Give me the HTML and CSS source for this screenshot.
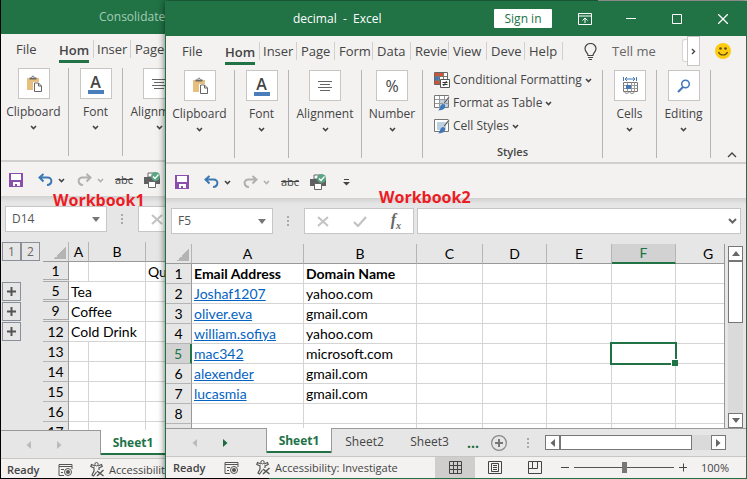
FILE: index.html
```html
<!DOCTYPE html>
<html lang="en">
<head>
<meta charset="utf-8">
<title>decimal - Excel</title>
<link rel="stylesheet" href="styles.css">
</head>
<body>
<svg class="defs" aria-hidden="true">
  <symbol id="chev" viewBox="0 0 7 5"><path d="M1 1l2.500 2.500L6 1" fill="none" stroke="currentColor" stroke-width="1.6"/></symbol>
  <symbol id="paste" viewBox="0 0 16 17">
    <path d="M1 3h12v4h-6v8H1z" fill="#e8c07d"/>
    <path d="M3.500 4.500V2.500h2C5.500 0 8.500 0 8.500 2.500h2v2z" fill="#6a6a6a"/><circle cx="7" cy="2.300" r=".8" fill="#fff"/>
    <path d="M8.500 8h4l3 3v5.500h-7z" fill="#fff" stroke="#666"/><path d="M12.500 8v3h3" fill="none" stroke="#666"/>
  </symbol>
  <symbol id="align" viewBox="0 0 16 12"><path d="M1 1.500h14M3 4.500h10M1 7.500h14M3 10.500h10" stroke="#666" fill="none"/></symbol>
  <symbol id="save" viewBox="0 0 14 14"><path d="M0 0h14v14H0z" fill="#8a4fae"/><path d="M2 1h10v6H2zM4 9h7v4H4z" fill="#fff"/><path d="M6 11h2v2H6z" fill="#8a4fae"/></symbol>
  <symbol id="undo" viewBox="0 0 15 14"><path d="M5.500 1L1.500 4.500l4 4M2 4.500h7.500c5.500 0 5 7-.5 7.500" fill="none" stroke="currentColor" stroke-width="2"/></symbol>
  <symbol id="print" viewBox="0 0 17 16">
    <path d="M4 1h6v4H4z" fill="#fff" stroke="#666"/><path d="M0 5h16v7H0z" fill="#606060"/><path d="M4.500 9.500h7v6h-7z" fill="#fff" stroke="#666"/>
    <circle cx="11.500" cy="4.500" r="4.500" fill="#5ba583"/><path d="M9 4.500l2 2 3.500-4" fill="none" stroke="#fff" stroke-width="1.200"/>
  </symbol>
  <symbol id="dots" viewBox="0 0 3 12"><path d="M0 1h2v2H0zM0 5h2v2H0zM0 9h2v2H0z" fill="#aaa"/></symbol>
  <symbol id="cross" viewBox="0 0 12 11"><path d="M1 1l10 9M11 1L1 10" stroke="#c3c3c3" stroke-width="2"/></symbol>
  <symbol id="tick" viewBox="0 0 14 11"><path d="M1 6l4 4 8-9" fill="none" stroke="#c3c3c3" stroke-width="2.200"/></symbol>
  <symbol id="record" viewBox="0 0 15 14">
    <path d="M14 6V1.500H1v11h5M1 3.500h13M3 6.500h3M3 9.500h2" fill="none" stroke="#555"/><circle cx="10" cy="9" r="3.500" fill="none" stroke="#555"/><circle cx="10" cy="9" r="2" fill="#555"/>
  </symbol>
  <symbol id="access" viewBox="0 0 15 15">
    <circle cx="6.500" cy="2.200" r="1.700" fill="none" stroke="#555"/>
    <path d="M5 4L1.500 2.500.8 4.500 4 6v3l-2 4 1.500 1L6.500 10M8 4l3.500-1.500.7 2L9 6v2" fill="none" stroke="#555" stroke-width="1.200"/>
    <path d="M7 9l6.500 5M13.500 8L7 14" stroke="#555" stroke-width="1.500"/>
  </symbol>
  <symbol id="tri" viewBox="0 0 5 8"><path d="M0 0l4.500 4L0 8z" fill="currentColor"/></symbol>
  <symbol id="drop" viewBox="0 0 8 5"><path d="M0 0h8L4 5z" fill="currentColor"/></symbol>
  <symbol id="brush" viewBox="0 0 16 16">
    <path d="M.5 1.500h14v12H.5z" fill="#fff" stroke="#777"/><path d="M3 4h9v8H3z" fill="#bcd0e2"/>
    <path d="M15.500 3l-5 6-1.500-1 6-7z" fill="#606060" stroke="#fff" stroke-width=".5"/><path d="M8.500 9c2 0 3 1 2.500 3-.5 3-4 3-7 3.500 2-1 1.500-5 4.500-6.500z" fill="#4078b8"/>
  </symbol>
</svg>

<main class="desktop">
  <section class="window back" aria-label="Consolidate">
    <header class="title"><h1>Consolidate</h1></header>
    <div class="ribbon">
      <nav class="tabs">
        <button class="file">File</button><button class="active"><span>Hom</span></button><button>Inser</button><button>Page</button>
      </nav>
      <div class="groups">
        <div class="group g-clip"><button><span class="box"><svg width="16" height="17"><use href="#paste"/></svg></span>Clipboard<svg class="chev"><use href="#chev"/></svg></button></div>
        <div class="group g-font"><button><span class="box"><span class="letter">A</span></span>Font<svg class="chev"><use href="#chev"/></svg></button></div>
        <div class="group g-align"><button><span class="box"><svg width="16" height="12"><use href="#align"/></svg></span>Alignment<svg class="chev"><use href="#chev"/></svg></button></div>
      </div>
    </div>
    <div class="quick">
      <button aria-label="Save"><svg width="14" height="14"><use href="#save"/></svg></button>
      <button class="undo" aria-label="Undo"><svg width="15" height="14"><use href="#undo"/></svg><svg class="chev"><use href="#chev"/></svg></button>
      <button class="redo" aria-label="Redo"><svg class="flip" width="15" height="14"><use href="#undo"/></svg><svg class="chev"><use href="#chev"/></svg></button>
      <button class="abc">abc</button>
      <button aria-label="Print preview"><svg width="17" height="16"><use href="#print"/></svg></button>
    </div>
    <div class="formula">
      <div class="name"><input aria-label="Name box" value="D14"><button aria-label="Names"><svg width="8" height="5"><use href="#drop"/></svg></button></div>
      <svg class="grip" width="3" height="12"><use href="#dots"/></svg>
      <div class="actions"><button aria-label="Cancel"><svg width="12" height="11"><use href="#cross"/></svg></button></div>
      <input class="entry" aria-label="Formula">
    </div>
    <div class="sheet">
      <div class="outline">
        <div class="levels"><button>1</button><button>2</button></div>
        <span class="spacer"></span>
        <button aria-label="Expand row 5"><svg width="9" height="9"><path d="M4.500 0v9M0 4.500h9" stroke="#555" stroke-width="2"/></svg></button>
        <button aria-label="Expand row 9"><svg width="9" height="9"><path d="M4.500 0v9M0 4.500h9" stroke="#555" stroke-width="2"/></svg></button>
        <button aria-label="Expand row 12"><svg width="9" height="9"><path d="M4.500 0v9M0 4.500h9" stroke="#555" stroke-width="2"/></svg></button>
      </div>
      <table>
        <colgroup><col class="c-row"><col class="c-a1"><col class="c-b1"><col></colgroup>
        <thead><tr><th class="corner"></th><th>A</th><th>B</th><th></th></tr></thead>
        <tbody>
          <tr><th class="fold">1</th><td></td><td></td><td>Qu</td></tr>
          <tr><th class="fold">5</th><td colspan="2">Tea</td><td></td></tr>
          <tr><th class="fold">9</th><td colspan="2">Coffee</td><td></td></tr>
          <tr><th>12</th><td colspan="2">Cold Drink</td><td></td></tr>
          <tr><th>13</th><td></td><td></td><td></td></tr>
          <tr><th>14</th><td></td><td></td><td></td></tr>
          <tr><th>15</th><td></td><td></td><td></td></tr>
          <tr><th>16</th><td></td><td></td><td></td></tr>
          <tr><th>17</th><td></td><td></td><td></td></tr>
        </tbody>
      </table>
    </div>
    <div class="sheettabs">
      <div class="move"><button aria-label="Previous sheet"><svg class="flip" width="5" height="8"><use href="#tri"/></svg></button><button aria-label="Next sheet"><svg width="5" height="8"><use href="#tri"/></svg></button></div>
      <button class="tab on">Sheet1</button>
      <span class="rest"></span>
    </div>
    <footer class="status"><b>Ready</b><svg width="15" height="14"><use href="#record"/></svg><span class="check"><svg width="15" height="15"><use href="#access"/></svg>Accessibility</span></footer>
  </section>

  <section class="window front" aria-label="decimal">
    <header class="title">
      <h1>decimal&nbsp; -&nbsp; Excel</h1>
      <button class="signin">Sign in</button>
      <div class="controls">
        <button aria-label="Ribbon display options"><svg width="14" height="12"><path d="M.5.5h13v11H.5zM.5 3h13M7 10V5M4.500 7.500L7 5l2.500 2.500" fill="none" stroke="#fff"/></svg></button>
        <button aria-label="Minimize"><svg width="10" height="10"><path d="M0 4.500h10" stroke="#fff"/></svg></button>
        <button aria-label="Maximize"><svg width="10" height="10"><path d="M.5.5h9v9h-9z" fill="none" stroke="#fff"/></svg></button>
        <button aria-label="Close"><svg width="10" height="10"><path d="M0 0l10 10M10 0L0 10" stroke="#fff" stroke-width="1.300"/></svg></button>
      </div>
    </header>
    <div class="ribbon">
      <nav class="tabs">
        <button class="file">File</button><button class="active"><span>Hom</span></button><button>Inser</button><button>Page</button><button>Form</button><button>Data</button><button>Revie</button><button>View</button><button>Deve</button><button>Help</button>
        <button class="tell"><svg width="13" height="17"><path d="M4 12.500C4 9.500 1 9 1 5.500a5.500 5 0 0 1 11 0c0 3.500-3 4-3 7zM4 14.500h5M5 16.500h3" fill="none" stroke="#444" stroke-width="1.200"/></svg>Tell me</button>
        <span class="edge"></span>
        <button class="more" aria-label="More tabs"><svg width="5" height="7"><path d="M1 1l2.500 2.500L1 6" fill="none" stroke="#444" stroke-width="1.400"/></svg></button>
        <button class="smile" aria-label="Feedback"><svg width="16" height="16"><circle cx="8" cy="8" r="8" fill="#fdcb12"/><circle cx="5.500" cy="5.500" r="1.300" fill="#5b4a12"/><circle cx="10.500" cy="5.500" r="1.300" fill="#5b4a12"/><path d="M3.500 9c1.500 4 7.500 4 9 0" fill="none" stroke="#5b4a12" stroke-width="1.200"/></svg></button>
      </nav>
      <div class="groups">
        <div class="group g-clip"><button><span class="box"><svg width="16" height="17"><use href="#paste"/></svg></span>Clipboard<svg class="chev"><use href="#chev"/></svg></button></div>
        <div class="group g-font"><button><span class="box"><span class="letter">A</span></span>Font<svg class="chev"><use href="#chev"/></svg></button></div>
        <div class="group g-align"><button><span class="box"><svg width="16" height="12"><use href="#align"/></svg></span>Alignment<svg class="chev"><use href="#chev"/></svg></button></div>
        <div class="group g-num"><button><span class="box"><span class="percent">%</span></span>Number<svg class="chev"><use href="#chev"/></svg></button></div>
        <div class="group g-styles">
          <button><svg width="16" height="16"><path d="M.5.5h13v12H.5z" fill="#fff" stroke="#666"/><path d="M1 1h8v3H1zM1 9h6v3H1z" fill="#d9512c"/><path d="M1 5h5v3H1z" fill="#4078b8"/><path d="M4.500 1v11M9.500 1v7M1 4.500h12M1 8.500h6" stroke="#777" fill="none"/><path d="M6.500 7.500h9v8h-9z" fill="#fff" stroke="#555"/><path d="M8.500 10.500h5M8.500 12.500h5M12.500 9l-3 5" stroke="#333"/></svg>Conditional Formatting<svg class="chev"><use href="#chev"/></svg></button>
          <button><svg width="16" height="16"><path d="M.5.500h14v12H.5z" fill="#fff" stroke="#777"/><path d="M5 5h9v7H5z" fill="#bcd0e2"/><path d="M5.500 1v12M10.500 1v11M1 4.500h13M1 8.500h13" fill="none" stroke="#999"/><path d="M15.500 3l-5 6-1.500-1 6-7z" fill="#606060" stroke="#fff" stroke-width=".5"/><path d="M8.500 9c2 0 3 1 2.500 3-.5 3-4 3-7 3.500 2-1 1.500-5 4.500-6.500z" fill="#4078b8"/></svg>Format as Table<svg class="chev"><use href="#chev"/></svg></button>
          <button><svg width="16" height="16"><use href="#brush"/></svg>Cell Styles<svg class="chev"><use href="#chev"/></svg></button>
          <span class="caption">Styles</span>
        </div>
        <div class="group g-cells"><button><span class="box"><svg width="16" height="17"><path d="M1.500 0v4M14.500 0v4M3 2h10M5 0l-2 2 2 2M11 0l2 2-2 2" fill="none" stroke="#4078b8"/><path d="M1.500 5.500h14v9h-14z" fill="#fff" stroke="#777"/><path d="M1.500 8.500h14M1.500 11.500h14M5.500 5.500v9M9.500 5.500v9M12.500 5.500v9" stroke="#999"/><path d="M4 8h5v4H4z" fill="#4078b8"/><path d="M2 14.500c2 2.500 4 2.500 5 0 2 2.500 4 2.500 6 0" fill="none" stroke="#777"/></svg></span>Cells<svg class="chev"><use href="#chev"/></svg></button></div>
        <div class="group g-edit"><button><span class="box"><svg width="14" height="14"><circle cx="8.500" cy="5" r="3.800" fill="none" stroke="#4078b8" stroke-width="1.500"/><path d="M6 8l-5 5" stroke="#4078b8" stroke-width="2"/></svg></span>Editing<svg class="chev"><use href="#chev"/></svg></button></div>
        <button class="collapse" aria-label="Collapse ribbon"><svg width="10" height="6"><path d="M1 5l4-4 4 4" fill="none" stroke="#444" stroke-width="1.400"/></svg></button>
      </div>
    </div>
    <div class="quick">
      <button aria-label="Save"><svg width="14" height="14"><use href="#save"/></svg></button>
      <button class="undo" aria-label="Undo"><svg width="15" height="14"><use href="#undo"/></svg><svg class="chev"><use href="#chev"/></svg></button>
      <button class="redo" aria-label="Redo"><svg class="flip" width="15" height="14"><use href="#undo"/></svg><svg class="chev"><use href="#chev"/></svg></button>
      <button class="abc">abc</button>
      <button aria-label="Print preview"><svg width="17" height="16"><use href="#print"/></svg></button>
      <button class="custom" aria-label="Customize toolbar"><svg width="7" height="7"><path d="M1 .5h5" stroke="#444"/><path d="M0 3h7L3.500 6.500z" fill="#444"/></svg></button>
    </div>
    <div class="formula">
      <div class="name"><input aria-label="Name box" value="F5"><button aria-label="Names"><svg width="8" height="5"><use href="#drop"/></svg></button></div>
      <svg class="grip" width="3" height="12"><use href="#dots"/></svg>
      <div class="actions"><button aria-label="Cancel"><svg width="12" height="11"><use href="#cross"/></svg></button><button aria-label="Enter"><svg width="14" height="11"><use href="#tick"/></svg></button><button class="fx">f<sub>x</sub></button></div>
      <div class="entry"><input aria-label="Formula"><button aria-label="Expand formula bar"><svg width="9" height="6"><path d="M1 1l3.500 3.500L8 1" fill="none" stroke="#666" stroke-width="2"/></svg></button></div>
    </div>
    <div class="sheet">
      <table>
        <colgroup><col class="c-row"><col class="c-a"><col class="c-b"><col class="c-c"><col class="c-d"><col class="c-e"><col class="c-f"><col></colgroup>
        <thead><tr><th class="corner"></th><th>A</th><th>B</th><th>C</th><th>D</th><th>E</th><th class="sel">F</th><th class="cut">G</th></tr></thead>
        <tbody>
          <tr class="bold"><th>1</th><td>Email Address</td><td>Domain Name</td><td></td><td></td><td></td><td></td><td></td></tr>
          <tr><th>2</th><td><a href="#">Joshaf1207</a></td><td>yahoo.com</td><td></td><td></td><td></td><td></td><td></td></tr>
          <tr><th>3</th><td><a href="#">oliver.eva</a></td><td>gmail.com</td><td></td><td></td><td></td><td></td><td></td></tr>
          <tr><th>4</th><td><a href="#">william.sofiya</a></td><td>yahoo.com</td><td></td><td></td><td></td><td></td><td></td></tr>
          <tr><th class="sel">5</th><td><a href="#">mac342</a></td><td>microsoft.com</td><td></td><td></td><td></td><td class="current"></td><td></td></tr>
          <tr><th>6</th><td><a href="#">alexender</a></td><td>gmail.com</td><td></td><td></td><td></td><td></td><td></td></tr>
          <tr><th>7</th><td><a href="#">lucasmia</a></td><td>gmail.com</td><td></td><td></td><td></td><td></td><td></td></tr>
          <tr><th>8</th><td></td><td></td><td></td><td></td><td></td><td></td><td></td></tr>
          <tr><th></th><td></td><td></td><td></td><td></td><td></td><td></td><td></td></tr>
        </tbody>
      </table>
      <div class="vscroll"><button aria-label="Scroll up"><svg class="turn" width="8" height="5"><use href="#drop"/></svg></button><span class="thumb"></span><span class="track"></span><button aria-label="Scroll down"><svg width="8" height="5"><use href="#drop"/></svg></button></div>
    </div>
    <div class="sheettabs">
      <div class="move"><button aria-label="Previous sheet"><svg class="flip" width="5" height="8"><use href="#tri"/></svg></button><button class="go" aria-label="Next sheet"><svg width="5" height="8"><use href="#tri"/></svg></button></div>
      <button class="tab on">Sheet1</button><button class="tab">Sheet2</button><button class="tab last">Sheet3</button>
      <div class="rest">
        <button class="dots">...</button>
        <button class="add" aria-label="New sheet"><svg width="16" height="16"><circle cx="8" cy="8" r="7.400" fill="none" stroke="#888" stroke-width="1.200"/><path d="M8 4v8M4 8h8" stroke="#777" stroke-width="2"/></svg></button>
        <svg class="grip" width="3" height="12"><use href="#dots"/></svg>
        <div class="hscroll"><button aria-label="Scroll left"><svg class="flip" width="5" height="8"><use href="#tri"/></svg></button><span class="thumb"></span><span class="track"></span><button aria-label="Scroll right"><svg width="5" height="8"><use href="#tri"/></svg></button></div>
      </div>
    </div>
    <footer class="status"><b>Ready</b><svg width="15" height="14"><use href="#record"/></svg><span class="check"><svg width="15" height="15"><use href="#access"/></svg>Accessibility: Investigate</span>
      <div class="views">
        <button class="on" aria-label="Normal"><svg width="13" height="13"><path d="M.5.5h12v12H.5zM.5 4.500h12M.5 8.500h12M4.500.5v12M8.500.5v12" fill="none" stroke="#444"/></svg></button>
        <button aria-label="Page layout"><svg width="14" height="13"><path d="M.5.5h13v12H.5zM3.500 2.500h7v8h-7zM5 4.500h4M5 6.500h4M5 8.500h4" fill="none" stroke="#444"/></svg></button>
        <button aria-label="Page break preview"><svg width="14" height="13"><path d="M.5.5h13v12H.5zM4.500.5v7h5v-7M.5 7.500h4" fill="none" stroke="#444"/></svg></button>
      </div>
      <div class="zoom"><button aria-label="Zoom out"><svg width="8" height="9"><path d="M0 4.500h8" stroke="#444"/></svg></button><input type="range" aria-label="Zoom" min="0" max="100" value="50"><button aria-label="Zoom in"><svg width="8" height="9"><path d="M0 4.500h8M4.500 .5v8" stroke="#444"/></svg></button><span>100%</span></div>
    </footer>
  </section>
  <strong class="note one">Workbook1</strong>
  <strong class="note two">Workbook2</strong>
</main>
</body>
</html>
```
FILE: styles.css
```css
* { box-sizing: border-box; }
body { margin: 0; font: 12px/16px "Open Sans", "Noto Sans", sans-serif; color: #444; }
button, input { font: inherit; color: inherit; border: 0; padding: 0; margin: 0; background: none; min-width: 0; }
svg { display: block; flex: none; }
.defs { position: absolute; width: 0; height: 0; }
.chev { width: 7px; height: 5px; }
.flip { transform: scaleX(-1); }
.turn { transform: scaleY(-1); }

.desktop { position: relative; height: 100vh; overflow: hidden; background: #bbb; }
.desktop::after { content: ""; position: absolute; left: 0; right: 0; bottom: 0; height: 1px; background: linear-gradient(to right, #000 269px, #217346 269px); }
.window { position: absolute; display: flex; flex-direction: column; background: #e6e6e6; overflow: hidden; }
.back { left: 0; top: 0; bottom: -1px; width: 80%; }
.back::before { content: ""; position: absolute; left: 0; top: 0; bottom: 0; width: 1px; background: #000; z-index: 1; }
.front { left: 165px; right: 0; top: 1px; bottom: 1px; border: solid #217346; border-width: 0 1px; box-shadow: 0 0 7px rgba(0, 0, 0, .6); }

/* Title bar */
.title { flex: none; height: 35px; display: flex; align-items: center; background: #217346; color: #fff; }
.title h1 { font-size: 12px; font-weight: 400; margin: 0 0 0 127px; white-space: nowrap; }
.back .title { height: 34px; }
.back h1 { margin-left: 99px; color: #a3cdb4; }
.signin { margin-left: auto; width: 58px; height: 19px; background: #fff; color: #217346; border-radius: 1px; }
.controls { display: flex; margin-left: 10px; }
.controls button { width: 46px; height: 34px; display: grid; place-items: center; }

/* Ribbon */
.ribbon { flex: none; background: #f3f2f1; border-bottom: 2px solid #d2d0ce; }
.tabs { display: flex; height: 30px; font-size: 13px; }
.tabs button { flex: none; width: 38px; height: 18px; margin-top: 6px; padding-left: 4px; text-align: left; overflow: hidden; border-right: 1px solid #d2d0ce; line-height: 18px; }
.tabs .file { width: 52px; padding-left: 16px; border: 0; }
.tabs .active { width: 41px; height: 24px; padding-left: 7px; font-weight: 600; border: 0; }
.tabs .active span { display: block; width: 30px; height: 22px; border-bottom: 3px solid #217346; }
.tabs .active + button { box-shadow: inset 1px 0 #d2d0ce; }
.tabs .tell { width: auto; display: flex; align-items: center; gap: 15px; margin-left: 17px; border: 0; color: #666; }
.edge { width: 5px; height: 23px; margin: 3px 0 0 auto; border: 1px solid #d8d6d4; border-right: 0; border-radius: 3px 0 0 3px; background: #fff; }
.tabs .more { width: 13px; height: 30px; margin: 0; padding: 0; display: grid; place-items: center; border: 1px solid #c8c6c4; background: #fff; }
.tabs .smile { width: 16px; margin: 6px 15px 0 15px; padding: 0; border: 0; }
.groups { display: flex; height: 96px; padding: 4px 0; }
.group { flex: none; border-right: 1px solid #b8b6b4; }
.group > button { width: 100%; display: flex; flex-direction: column; align-items: center; }
.box { display: grid; place-items: center; width: 32px; height: 31px; margin-bottom: 5px; background: #fff; border: 1px solid #c8c6c4; }
.group > button > .chev { margin-top: 5px; }
.letter { width: 16px; height: 20px; border-bottom: 4px solid #4a7ebb; font: 600 16px/16px "Open Sans", sans-serif; text-align: center; }
.percent { font-size: 16px; }
.g-clip { width: 69px; padding-right: 1px; }
.g-font { width: 54px; }
.g-align { width: 73px; }
.g-num { width: 61px; }
.g-styles { width: 180px; display: flex; flex-direction: column; align-items: flex-start; padding-left: 11px; gap: 3px; }
.g-styles > button { flex-direction: row; width: auto; gap: 3px; height: 20px; white-space: nowrap; }
.g-styles > button > .chev { margin-top: 0; }
.caption { align-self: center; margin: auto 11px 0 0; font-size: 11px; font-weight: 600; line-height: 12px; }
.g-cells, .g-edit { width: 54px; }
.collapse { margin: auto 9px 0 auto; }

/* Quick access toolbar */
.quick { flex: none; height: 34px; display: flex; align-items: center; padding: 2px 9px 0; background: #f3f2f1; }
.quick button { flex: none; display: flex; align-items: center; gap: 5px; }
.quick .undo { width: 39px; margin-left: 15px; color: #3c78b4; }
.quick .undo .chev { color: #444; }
.quick .redo { width: 38px; color: #b0b0b0; }
.quick .abc { width: 29px; font-size: 11px; text-decoration: line-through; }
.quick .custom { margin-left: 16px; }

/* Formula bar */
.formula { flex: none; height: 46px; display: flex; padding: 10px 5px 10px; background: linear-gradient(#d0d0d0, #e6e6e6 6px); }
.name, .actions, .entry { display: flex; align-items: center; border: 1px solid #c6c6c6; background: #fff; }
.name { flex: none; width: 102px; padding: 0 6px; color: #555; }
.name input { flex: 1; }
.name button { color: #777; }
.grip { margin: 7px 14px 0 14px; }
.actions { flex: none; width: 110px; padding: 0 12px; justify-content: space-between; }
.fx { font: italic bold 16px/18px "Liberation Serif", serif; color: #666; }
.fx sub { font-size: 10px; line-height: 8px; }
.entry { flex: 1; margin-left: 3px; padding-right: 3px; }
.entry input { flex: 1; }

/* Worksheet */
.sheet { flex: 1; min-height: 0; display: flex; overflow: hidden; }
table { flex: 1; width: 0; align-self: flex-start; table-layout: fixed; border-collapse: separate; border-spacing: 0; font: 14px/19px Lato, Carlito, sans-serif; color: #000; background: #fff; border-right: 1px solid #999; }
tr { height: 20px; }
th, td { height: 20px; padding: 0; border: solid #d4d4d4; border-width: 0 1px 1px 0; overflow: hidden; white-space: nowrap; }
td { padding-left: 2px; }
tr > :last-child { border-right: 0; }
th { font-weight: 400; background: #e6e6e6; border-color: #b5b5b5; }
thead th { border-bottom-color: #999; }
tbody th { border-right-color: #999; }
.corner { background: linear-gradient(135deg, #e6e6e6 50%, #b4b4b4 50%) 11px 5px / 12px 12px no-repeat #e6e6e6; }
.fold { border-bottom: 3px double #aaa; line-height: 17px; }
.bold { font-weight: 700; }
.cut { padding-left: 16px; }
thead .sel { background: #d2d2d2; color: #217346; border-bottom: 2px solid #217346; line-height: 18px; }
tbody .sel { background: #d2d2d2; color: #217346; border-right: 2px solid #217346; }
td a { color: #0563c1; }
.current { position: relative; overflow: visible; }
.current::before { content: ""; position: absolute; inset: -2px; border: 2px solid #217346; }
.current::after { content: ""; position: absolute; right: -3px; bottom: -3px; width: 6px; height: 6px; background: #217346; border: solid #fff; border-width: 1px 0 0 1px; }
.c-row { width: 26px; }
.c-a { width: 112px; }
.c-b { width: 113px; }
.c-c { width: 66px; }
.c-d, .c-f { width: 64px; }
.c-e { width: 65px; }
.c-a1 { width: 20px; }
.c-b1 { width: 57px; }
.outline { width: 43px; flex: none; padding-left: 2px; color: #666; }
.outline button { display: grid; place-items: center; width: 19px; height: 19px; margin-bottom: 1px; border: 1px solid #8a8f99; line-height: 17px; }
.levels { display: flex; }
.spacer { display: block; height: 20px; }

/* Scroll bars */
.vscroll, .hscroll { display: flex; background: #dadada; }
.vscroll { flex: none; flex-direction: column; width: 15px; margin: 2px 3px 0; }
.vscroll button, .hscroll button { flex: none; width: 15px; height: 15px; display: grid; place-items: center; border: 1px solid #777; background: #fff; color: #666; }
.thumb { border: 1px solid #777; background: #fff; }
.vscroll .thumb { height: 62px; }
.track { flex: 1; }
.hscroll { flex: 1; margin-right: 20px; }
.hscroll .thumb { flex: 7; }

/* Sheet tabs */
.sheettabs { flex: none; height: 28px; display: flex; }
.move { flex: none; width: 100px; padding: 0 38px 0 26px; display: flex; justify-content: space-between; align-items: center; border-top: 1px solid #999; color: #bbb; }
.move .go { color: #1a6b3d; }
.tab { flex: none; width: 65px; height: 25px; padding-top: 1px; border-top: 1px solid #999; }
.tab.on { width: 66px; border: solid #999; border-width: 0 1px; box-shadow: inset 0 -2px #217346; background: #fff; color: #217346; font-weight: 700; }
.tab + .tab:not(.last) { box-shadow: inset -1px 5px #e6e6e6, inset -1px 0 #999; }
.rest { flex: 1; display: flex; align-items: center; border-top: 1px solid #999; }
.dots { margin-left: 5px; font-weight: 700; font-size: 14px; color: #1a6b3d; }
.add { margin-left: 12px; }
.rest .grip { margin: 0 15px 0 20px; }

/* Status bar */
.status { flex: none; height: 22px; display: flex; align-items: center; padding-left: 7px; border-top: 1px solid #c8c6c4; background: #f3f2f1; font-size: 11px; white-space: nowrap; }
.status b { width: 51px; font-weight: 600; }
.check { display: flex; align-items: center; gap: 4px; margin-left: 17px; }
.views { display: flex; margin-left: auto; height: 100%; }
.views button { width: 40px; display: grid; place-items: center; }
.views .on { background: #d0cecc; }
.zoom { display: flex; align-items: center; gap: 5px; margin: 0 17px 0 6px; }
.zoom span { margin-left: 9px; }
.zoom input { width: 100px; height: 12px; appearance: none; background: linear-gradient(#555, #555) center / 100% 1px no-repeat; }
.zoom input::-webkit-slider-thumb { appearance: none; width: 5px; height: 11px; background: #777; }

/* Window labels */
.note { position: absolute; font-size: 16px; line-height: 20px; color: #ed1c24; }
.one { left: 53px; top: 190px; }
.two { left: 379px; top: 187px; }
```
